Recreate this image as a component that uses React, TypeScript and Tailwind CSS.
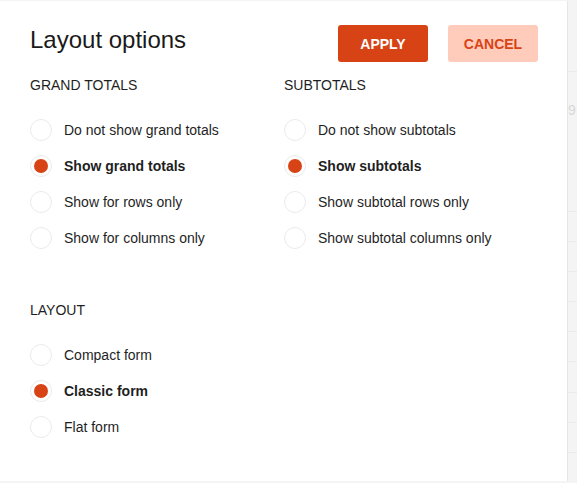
import React from 'react';

type Opt = { label: string; checked?: boolean };

const grandTotals: Opt[] = [
  { label: 'Do not show grand totals' },
  { label: 'Show grand totals', checked: true },
  { label: 'Show for rows only' },
  { label: 'Show for columns only' },
];

const subtotals: Opt[] = [
  { label: 'Do not show subtotals' },
  { label: 'Show subtotals', checked: true },
  { label: 'Show subtotal rows only' },
  { label: 'Show subtotal columns only' },
];

const layouts: Opt[] = [
  { label: 'Compact form' },
  { label: 'Classic form', checked: true },
  { label: 'Flat form' },
];

function Radio({ label, checked }: Opt) {
  return (
    <div className="flex h-9 items-center gap-3">
      <span className="flex h-[22px] w-[22px] shrink-0 items-center justify-center rounded-full border border-[#ebebeb] bg-white">
        {checked && <span className="h-[14px] w-[14px] rounded-full bg-[#d84315]" />}
      </span>
      <span className={`text-sm leading-5 text-[#1f1f1f] ${checked ? 'font-bold' : ''}`}>{label}</span>
    </div>
  );
}

function Group({ title, options }: { title: string; options: Opt[] }) {
  return (
    <div>
      <h3 className="text-sm leading-5 text-[#1f1f1f]">{title}</h3>
      <div className="mt-[17px]">
        {options.map((o) => (
          <Radio key={o.label} {...o} />
        ))}
      </div>
    </div>
  );
}

export default function App() {
  const lines = [71, 211, 241, 271, 301, 331, 361, 392, 422, 452];
  return (
    <div
      className="relative h-[483px] w-[577px] overflow-hidden bg-[#f4f4f4]"
      style={{ fontFamily: '"Liberation Sans", Arial, sans-serif' }}
    >
      {/* grid behind the dialog */}
      {lines.map((y) => (
        <div key={y} className="absolute left-0 right-0 h-px bg-[#ebebeb]" style={{ top: y }} />
      ))}
      <span className="absolute left-[568px] top-[100px] text-sm text-[#d8d8d8]">9</span>

      <div className="relative mt-px h-[480px] w-[568px] border-r border-[#e6e6e6] bg-white pl-[30px] pr-[29px] pt-[24px]">
        <div className="flex items-start justify-between">
          <h2 className="mt-[3px] text-2xl leading-6 text-[#1a1a1a]">Layout options</h2>
          <div className="flex gap-5">
            <button className="h-[37px] w-[90px] rounded-[3px] bg-[#d84315] text-sm font-bold text-white">
              APPLY
            </button>
            <button className="h-[37px] w-[90px] rounded-[3px] bg-[#ffccbc] text-sm font-bold text-[#d84315]">
              CANCEL
            </button>
          </div>
        </div>

        <div className="mt-[13px] grid grid-cols-[254px_1fr]">
          <Group title="GRAND TOTALS" options={grandTotals} />
          <Group title="SUBTOTALS" options={subtotals} />
        </div>

        <div className="mt-[44px]">
          <Group title="LAYOUT" options={layouts} />
        </div>
      </div>
    </div>
  );
}
